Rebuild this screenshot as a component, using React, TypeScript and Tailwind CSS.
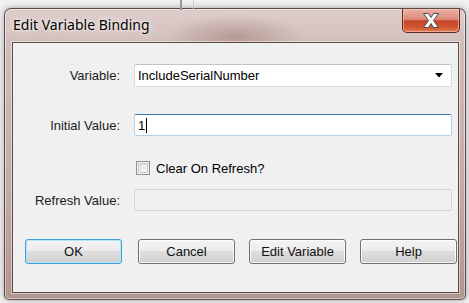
import * as React from "react";

const labelCls = "w-[107px] shrink-0 text-right text-[13px] leading-none text-[#1b1b1b]";

const WinButton: React.FC<{ children: React.ReactNode; primary?: boolean; className?: string }> = ({ children, primary, className }) => (
  <button
    className={
      "h-[25px] w-[97px] rounded-[3px] border text-[13px] text-[#111] leading-none bg-[linear-gradient(#f4f4f4,#ececec_45%,#dedede_50%,#d0d0d0)] " +
      (primary
        ? "border-[#3c9fd6] shadow-[inset_0_0_0_1px_#b8e6fb] "
        : "border-[#707070] shadow-[inset_0_0_0_1px_rgba(255,255,255,0.85)] ") +
      (className ?? "")
    }
  >
    {children}
  </button>
);

export default function App() {
  return (
    <div className="relative w-[469px] h-[303px] overflow-hidden bg-[#f1f1f1] font-['Liberation_Sans',Arial,sans-serif]">
      {/* desktop behind the dialog */}
      <div className="absolute left-[180px] top-0 h-[10px] w-[2px] bg-[#8e9aa6]" />
      <div className="absolute left-[193px] top-0 h-[10px] w-px bg-[#c9c9c9]" />

      <div className="pl-[4px] pt-[8px]">
        <div className="flex h-[292px] w-[462px] flex-col rounded-t-[7px] rounded-b-[5px] border border-[#4a3533]/80 bg-[radial-gradient(ellipse_70px_22px_at_230px_28px,rgba(150,115,108,0.5),transparent),linear-gradient(#ddcdca,#d0bcb8_15%,#c4aca8_60%,#b1958f)] shadow-[inset_0_0_0_1px_rgba(255,255,255,0.45),0_0_6px_rgba(0,0,0,0.35)]">
          {/* title bar */}
          <div className="flex h-[33px] items-start">
            <span className="ml-[8px] mt-[9px] font-['Noto_Sans',sans-serif] text-[14px] leading-none text-black [text-shadow:0_0_8px_rgba(255,255,255,0.95),0_0_3px_rgba(255,255,255,0.9)]">
              Edit Variable Binding
            </span>
            <div className="ml-auto mr-[5px] flex h-[24px] w-[58px] items-center justify-center rounded-b-[5px] border border-t-0 border-[#5f2a22] bg-[linear-gradient(#eab1a5,#dc8a78_45%,#c6432a_52%,#d05834_80%,#e27c50)] shadow-[inset_0_0_0_1px_rgba(255,210,200,0.55)]">
              <svg width="16" height="15" viewBox="-0.5 -0.5 16 15">
                <polygon
                  points="0,0 5,0 7.5,4 10,0 15,0 10,7 15,14 10,14 7.5,10 5,14 0,14 5,7"
                  fill="#ffffff"
                  stroke="#4e4e4e"
                  strokeWidth="1"
                  strokeLinejoin="round"
                />
              </svg>
            </div>
          </div>

          {/* client area */}
          <div className="ml-[7px] h-[251px] w-[447px] border border-[#5e4a47] bg-[#f0f0f0] shadow-[0_0_0_1px_rgba(255,255,255,0.45)]">
            <div className="flex flex-col">
              <div className="mt-[21px] flex items-center gap-x-[14px]">
                <div className={labelCls}>Variable:</div>
                <div className="flex h-[23px] w-[318px] items-center rounded-[2px] border border-[#d9d9d9] border-t-[#c4c4c4] bg-white pl-[3px] pr-[8px] text-[13px] text-black">
                  <span className="leading-none">IncludeSerialNumber</span>
                  <svg className="ml-auto" width="8" height="5" viewBox="0 0 8 5">
                    <polygon points="0,0 8,0 4,4.5" fill="#000" />
                  </svg>
                </div>
              </div>

              <div className="mt-[27px] flex items-center gap-x-[14px]">
                <div className={labelCls}>Initial Value:</div>
                <div className="flex h-[22px] w-[318px] items-center rounded-[2px] border border-[#b6d0e8] border-t-[#3d7bad] bg-white pl-[3px] text-[13px] text-black">
                  <span className="leading-none">1</span>
                  <span className="ml-px h-[15px] w-px bg-black" />
                </div>
              </div>

              <div className="mt-[25px] flex h-[14px] items-center pl-[123px]">
                <span className="h-[14px] w-[14px] border border-[#8e8f8f] bg-[linear-gradient(135deg,#dcdcdc,#fbfbfb)] shadow-[inset_0_0_0_1px_#f4f4f4,inset_0_0_0_2px_#c9c9c9]" />
                <span className="ml-[6px] text-[13px] leading-none text-black">Clear On Refresh?</span>
              </div>

              <div className="mt-[14px] flex items-center gap-x-[14px]">
                <div className={labelCls}>Refresh Value:</div>
                <div className="h-[22px] w-[318px] rounded-[2px] border border-[#d5d5d5] bg-[#f0f0f0]" />
              </div>
            </div>

            <div className="mt-[28px] flex pl-[12px]">
              <WinButton primary>OK</WinButton>
              <WinButton className="ml-[16px]">Cancel</WinButton>
              <WinButton className="ml-[14px]">Edit Variable</WinButton>
              <WinButton className="ml-[14px]">Help</WinButton>
            </div>
          </div>
        </div>
      </div>
    </div>
  );
}
